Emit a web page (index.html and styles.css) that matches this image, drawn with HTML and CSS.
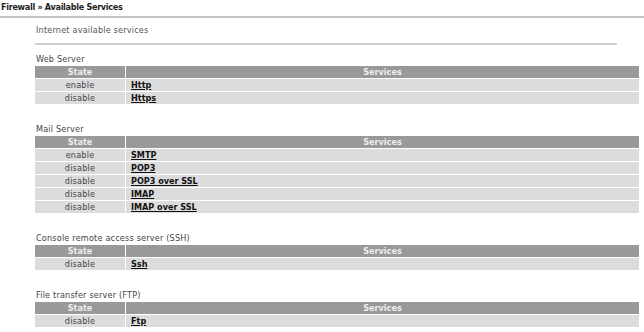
FILE: index.html
```html
<!DOCTYPE html>
<html><head>
  <meta charset="utf-8">
  <title>Firewall - Available Services</title>
  <link rel="stylesheet" href="styles.css">
</head>
<body>

<div class="title">Firewall &raquo; Available Services</div>

<div class="content">
<div class="subtitle">Internet available services</div>

<div class="section">
<div class="label">Web Server</div>
<table class="services">
<tr><th class="state">State</th><th>Services</th></tr>
<tr><td class="state">enable</td><td><a href="#">Http</a></td></tr>
<tr><td class="state">disable</td><td><a href="#">Https</a></td></tr>
</table>
</div>

<div class="section">
<div class="label">Mail Server</div>
<table class="services">
<tr><th class="state">State</th><th>Services</th></tr>
<tr><td class="state">enable</td><td><a href="#">SMTP</a></td></tr>
<tr><td class="state">disable</td><td><a href="#">POP3</a></td></tr>
<tr><td class="state">disable</td><td><a href="#">POP3 over SSL</a></td></tr>
<tr><td class="state">disable</td><td><a href="#">IMAP</a></td></tr>
<tr><td class="state">disable</td><td><a href="#">IMAP over SSL</a></td></tr>
</table>
</div>

<div class="section">
<div class="label">Console remote access server (SSH)</div>
<table class="services">
<tr><th class="state">State</th><th>Services</th></tr>
<tr><td class="state">disable</td><td><a href="#">Ssh</a></td></tr>
</table>
</div>

<div class="section">
<div class="label">File transfer server (FTP)</div>
<table class="services">
<tr><th class="state">State</th><th>Services</th></tr>
<tr><td class="state">disable</td><td><a href="#">Ftp</a></td></tr>
</table>
</div>
</div>

</body>
</html>
```

FILE: styles.css
```css
html, body {
  margin: 0;
  padding: 0;
  background: #fff;
  font-family: "DejaVu Sans Condensed", "DejaVu Sans", sans-serif;
  font-size: 9px;
  color: #333;
}

.title {
  font-weight: bold;
  color: #222;
  letter-spacing: -0.3px;
  padding: 2px 1px 4px;
  border-bottom: 2px solid #c4c4c4;
}

.content {
  padding: 0 5px 0 35px;
}

.subtitle {
  color: #555;
  letter-spacing: 0.2px;
  padding: 7px 1px 8px;
  margin-right: 22px;
  border-bottom: 2px solid #d0d0d0;
}

.section {
  margin-top: 9px;
  margin-bottom: 19px;
}

.label {
  color: #444;
  letter-spacing: 0.2px;
  padding: 0 1px 2px;
}

.services {
  width: 100%;
  border-collapse: separate;
  border-spacing: 0 1px;
  margin-top: -1px;
}

.services th, .services td {
  padding: 0 5px;
  height: 12px;
  line-height: 12px;
}

.services th {
  background: #999;
  color: #eee;
  text-align: center;
}

.services td {
  background: #dcdcdc;
}

.services .state {
  width: 80px;
  text-align: center;
  border-right: 1px solid #fff;
}

.services td.state {
  color: #444;
  letter-spacing: 0.2px;
}

.services a {
  color: #111;
  font-weight: bold;
}
```
